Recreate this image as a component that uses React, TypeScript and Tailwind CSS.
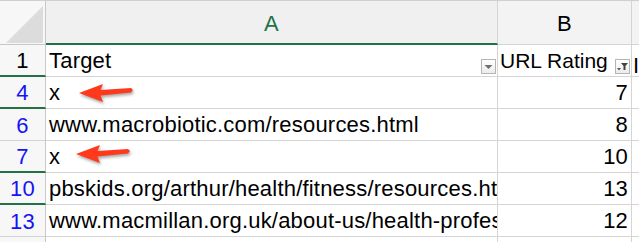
import type { ReactNode } from "react";

type Row = {
  n: string;
  target: string;
  rating: string;
  arrow?: "a" | "b";
  green?: boolean;
};

const rows: Row[] = [
  { n: "4", target: "x", rating: "7", arrow: "a", green: true },
  { n: "6", target: "www.macrobiotic.com/resources.html", rating: "8" },
  { n: "7", target: "x", rating: "10", arrow: "b", green: true },
  { n: "10", target: "pbskids.org/arthur/health/fitness/resources.html", rating: "13", green: true },
  { n: "13", target: "www.macmillan.org.uk/about-us/health-professionals", rating: "12" },
];

function Arrow({ className }: { className: string }) {
  return (
    <svg
      className={className}
      width="56"
      height="22"
      viewBox="0 0 56 22"
      style={{ filter: "drop-shadow(1px 2px 1.5px rgba(0,0,0,0.35))" }}
    >
      <polygon
        points="0,11 24,2 21.5,8 52,6 54,8 52,10.5 21.5,13.5 24,20"
        fill="#ff3a1c"
      />
    </svg>
  );
}

function FilterButton({ funnel }: { funnel?: boolean }) {
  return (
    <div className="flex h-[15px] w-[15px] shrink-0 items-center justify-center border border-[#b5b5b5] bg-gradient-to-b from-white to-[#ececec]">
      {funnel ? (
        <svg width="13" height="11" viewBox="0 0 13 11">
          <polygon points="1,7 5,7 3,9.5" fill="#555" />
          <polygon points="5,2 12,2 9.5,5 9.5,9 7.5,9 7.5,5" fill="#444" />
        </svg>
      ) : (
        <svg width="9" height="6" viewBox="0 0 9 6">
          <polygon points="0.5,1 8.5,1 4.5,5" fill="#707070" />
        </svg>
      )}
    </div>
  );
}

function Cell({ children, className = "" }: { children?: ReactNode; className?: string }) {
  return (
    <div className={`relative overflow-hidden border-b border-r border-[#d4d4d4] ${className}`}>
      {children}
    </div>
  );
}

export default function App() {
  return (
    <div
      className="h-[242px] w-[639px] overflow-hidden border-t border-[#d0d0d0] bg-white text-[22px] tracking-[0.2px] text-black"
      style={{ fontFamily: "'Liberation Sans', Arial, sans-serif" }}
    >
      <div className="grid grid-cols-[46px_452px_134px_40px] grid-rows-[44px_32px_32px_32px_32px_32px_32px_32px]">
        {/* header row */}
        <div className="relative border-b border-r border-[#c8c8c8] bg-[#f7f7f7]">
          <svg className="absolute left-[6px] top-[5px]" width="37" height="37" viewBox="0 0 37 37">
            <polygon points="37,0 37,37 0,37" fill="#dcdcdc" />
          </svg>
        </div>
        <div className="flex items-center justify-center border-b-2 border-r border-b-[#217346] border-r-[#d4d4d4] bg-[#f0f0f0] pt-[2px] text-[#217346]">
          A
        </div>
        <div className="flex items-center justify-center border-b border-r border-[#d4d4d4] bg-[#f3f3f3] pt-[2px]">
          B
        </div>
        <div className="border-b border-[#d4d4d4] bg-[#f3f3f3]" />

        {/* row 1 */}
        <div className="flex items-center justify-center border-b-2 border-r border-b-[#217346] border-r-[#c8c8c8] bg-[#f7f7f7] pt-[1px]">
          1
        </div>
        <Cell className="flex items-center justify-between pl-[3px] pr-[1px]">
          <span>Target</span>
          <div className="self-end pb-[2px]">
            <FilterButton />
          </div>
        </Cell>
        <Cell className="flex items-center justify-between pl-[2px] pr-[1px]">
          <span className="whitespace-nowrap text-[21px] tracking-normal">URL Rating</span>
          <div className="self-end pb-[2px]">
            <FilterButton funnel />
          </div>
        </Cell>
        <div className="overflow-hidden whitespace-nowrap border-b border-[#d4d4d4] pl-[1px] pt-[4px]">
          Index
        </div>

        {rows.map((r) => (
          <RowView key={r.n} row={r} />
        ))}

        <div className="border-r border-[#c8c8c8] bg-[#f7f7f7]" />
        <div className="border-r border-[#d4d4d4]" />
        <div className="border-r border-[#d4d4d4]" />
        <div />
      </div>
    </div>
  );
}

function RowView({ row }: { row: Row }) {
  return (
    <>
      <div
        className={`flex items-center justify-center border-r border-r-[#c8c8c8] bg-[#f7f7f7] pt-[1px] text-[#1414f5] ${
          row.green ? "border-b-2 border-b-[#217346]" : "border-b border-b-[#d4d4d4]"
        }`}
      >
        {row.n}
      </div>
      <Cell className="flex items-center whitespace-nowrap pl-[3px]">
        <span>{row.target}</span>
        {row.arrow === "a" ? <Arrow className="absolute left-[33px] top-[5px]" /> : null}
        {row.arrow === "b" ? <Arrow className="absolute left-[30px] top-[2px]" /> : null}
      </Cell>
      <Cell className="flex items-center justify-end pr-[3px]">{row.rating}</Cell>
      <div className="border-b border-[#d4d4d4]" />
    </>
  );
}
